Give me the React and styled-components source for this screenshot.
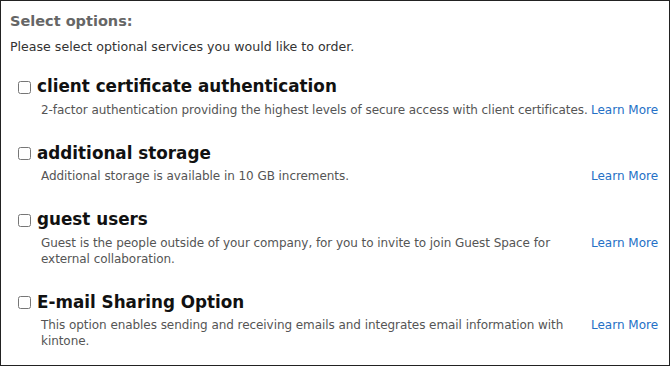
import React from "react";
import styled, { createGlobalStyle } from "styled-components";

const GlobalStyle = createGlobalStyle`
  html, body {
    margin: 0;
    padding: 0;
    background: #fff;
  }
  body {
    font-family: "DejaVu Sans", Verdana, sans-serif;
  }
`;

const Frame = styled.div`
  box-sizing: border-box;
  width: 670px;
  height: 366px;
  border: 1px solid #222;
  padding: 10px 10px 0 9px;
  background: #fff;
`;

const Heading = styled.h2`
  margin: 0;
  font-size: 14.5px;
  line-height: 20px;
  font-weight: bold;
  color: #666;
`;

const Intro = styled.p`
  margin: 8px 0 0;
  font-size: 12.6px;
  line-height: 16px;
  color: #333;
`;

const OptionList = styled.div`
  display: flex;
  flex-direction: column;
  gap: 23px;
  margin-top: 19px;
`;

const Option = styled.div`
  display: flex;
  flex-direction: column;
`;

const TitleRow = styled.label`
  display: flex;
  align-items: center;
  gap: 6px;
  padding-left: 8px;
`;

const Check = styled.input.attrs({ type: "checkbox" })`
  margin: 2px 0 0;
  width: 13px;
  height: 13px;
`;

const Title = styled.span`
  font-size: 16.8px;
  line-height: 24px;
  font-weight: bold;
  color: #111;
`;

const DescRow = styled.div`
  display: grid;
  grid-template-columns: 1fr 68px;
  column-gap: 2px;
  padding-left: 31px;
  margin-top: 3.5px;
`;

const Desc = styled.p`
  margin: 0;
  font-size: 12px;
  line-height: 16px;
  letter-spacing: -0.06px;
  color: #555;
`;

const LearnMore = styled.a`
  font-size: 12px;
  line-height: 16px;
  color: #2470c6;
  text-decoration: none;
  white-space: nowrap;
`;

const options = [
  {
    title: "client certificate authentication",
    desc: "2-factor authentication providing the highest levels of secure access with client certificates.",
  },
  {
    title: "additional storage",
    desc: "Additional storage is available in 10 GB increments.",
  },
  {
    title: "guest users",
    desc: "Guest is the people outside of your company, for you to invite to join Guest Space for external collaboration.",
  },
  {
    title: "E-mail Sharing Option",
    desc: "This option enables sending and receiving emails and integrates email information with kintone.",
  },
];

export default function App() {
  return (
    <>
      <GlobalStyle />
      <Frame>
        <Heading>Select options:</Heading>
        <Intro>Please select optional services you would like to order.</Intro>
        <OptionList>
          {options.map((o) => (
            <Option key={o.title}>
              <TitleRow>
                <Check />
                <Title>{o.title}</Title>
              </TitleRow>
              <DescRow>
                <Desc>{o.desc}</Desc>
                <LearnMore href="#">Learn More</LearnMore>
              </DescRow>
            </Option>
          ))}
        </OptionList>
      </Frame>
    </>
  );
}
